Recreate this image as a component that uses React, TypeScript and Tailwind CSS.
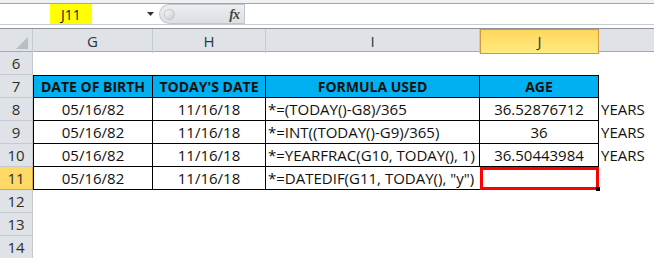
import React from "react";

// column widths of the visible sheet area (row header, G, H, I, J, K)
const cols = "grid-cols-[33px_120px_113px_214px_119px_1fr]";

const rows = [
  { n: 8, dob: "05/16/82", today: "11/16/18", formula: '*=(TODAY()-G8)/365', age: "36.52876712", unit: "YEARS" },
  { n: 9, dob: "05/16/82", today: "11/16/18", formula: "*=INT((TODAY()-G9)/365)", age: "36", unit: "YEARS" },
  { n: 10, dob: "05/16/82", today: "11/16/18", formula: "*=YEARFRAC(G10, TODAY(), 1)", age: "36.50443984", unit: "YEARS" },
];

function RowHead({ n, active }: { n: number; active?: boolean }) {
  return (
    <div
      className={
        active
          ? "h-[23px] flex items-center justify-center bg-[#ffd966] border-b border-r border-[#e3a33b] text-[15px] text-[#2d2d2d]"
          : "h-[23px] flex items-center justify-center bg-[#dfe3e8] border-b border-r border-[#c5cad1] text-[15px] text-[#2d2d2d]"
      }
    >
      {n}
    </div>
  );
}

export default function App() {
  return (
    <div className="w-[654px] h-[258px] overflow-hidden bg-white font-['Open_Sans',sans-serif] text-[#111]">
      {/* formula bar */}
      <div className="h-[4px] bg-[#eef0f3] border-b border-[#a2a6ab]" />
      <div className="h-[20px] flex items-stretch bg-white">
        <div className="w-[159px] relative flex items-center">
          <div className="ml-[50px] w-[42px] h-full bg-[#ffff00] flex items-center justify-center text-[14px] text-[#222]">
            J11
          </div>
          <svg className="absolute left-[147px] top-[8px]" width="8" height="5" viewBox="0 0 8 5">
            <path d="M0 0h7L3.5 4z" fill="#333" />
          </svg>
        </div>
        <div className="w-[85px] relative rounded-l-[11px] bg-gradient-to-b from-[#eceef1] to-[#dcdfe3] border border-r-0 border-[#c3c7cc] flex items-center justify-end pr-[5px]">
          <div className="absolute left-[4px] top-[4px] w-[11px] h-[11px] rounded-full bg-gradient-to-br from-[#f8f9fa] to-[#c9cdd2] border border-[#c0c4c9]" />
          <span className="font-['Liberation_Serif',serif] italic font-bold text-[14px] text-[#444] tracking-[-1px]">fx</span>
        </div>
        <div className="flex-1 border-l border-[#c3c7cc]" />
      </div>
      <div className="h-[5px] border-t border-[#c9ccd0] bg-white border-b border-b-[#8f9398]" />

      {/* column headers */}
      <div className={`grid ${cols} h-[23px] bg-[#dfe3e8] border-b border-[#a6abb1] text-[15px] text-[#2b3440]`}>
        <div className="relative border-r border-[#c5cad1]">
          <svg className="absolute right-[4px] bottom-[4px]" width="12" height="12" viewBox="0 0 12 12">
            <path d="M12 0v12H0z" fill="#b9bec5" />
          </svg>
        </div>
        <div className="flex items-center justify-center border-r border-[#c5cad1]">G</div>
        <div className="flex items-center justify-center border-r border-[#c5cad1]">H</div>
        <div className="flex items-center justify-center border-r border-[#c5cad1]">I</div>
        <div className="flex items-center justify-center bg-gradient-to-b from-[#ffd65c] to-[#ffeb80] border border-[#d39a3a] -mb-px">
          J
        </div>
        <div />
      </div>

      {/* sheet body */}
      <div className={`grid ${cols} text-[15px]`}>
        <RowHead n={6} />
        <div className="col-span-5" />

        <RowHead n={7} />
        <div className="h-[23px] flex items-center justify-center bg-[#00b0f0] border border-black font-bold text-[14px]">DATE OF BIRTH</div>
        <div className="h-[23px] flex items-center justify-center bg-[#00b0f0] border-y border-r border-black font-bold text-[14px]">TODAY'S DATE</div>
        <div className="h-[23px] flex items-center justify-center bg-[#00b0f0] border-y border-r border-black font-bold text-[14px]">FORMULA USED</div>
        <div className="h-[23px] flex items-center justify-center bg-[#00b0f0] border-y border-r border-black font-bold text-[14px]">AGE</div>
        <div />

        {rows.map((r) => (
          <React.Fragment key={r.n}>
            <RowHead n={r.n} />
            <div className="h-[23px] flex items-center justify-center border-x border-b border-black">{r.dob}</div>
            <div className="h-[23px] flex items-center justify-center border-r border-b border-black">{r.today}</div>
            <div className="h-[23px] flex items-center pl-[2px] border-r border-b border-black whitespace-nowrap">{r.formula}</div>
            <div className="h-[23px] flex items-center justify-center border-r border-b border-black">{r.age}</div>
            <div className="h-[23px] flex items-center pl-[2px]">{r.unit}</div>
          </React.Fragment>
        ))}

        <RowHead n={11} active />
        <div className="h-[23px] flex items-center justify-center border-x border-b border-black">05/16/82</div>
        <div className="h-[23px] flex items-center justify-center border-r border-b border-black">11/16/18</div>
        <div className="h-[23px] flex items-center pl-[2px] border-b border-black whitespace-nowrap">*=DATEDIF(G11, TODAY(), "y")</div>
        {/* selected cell with fill handle */}
        <div className="relative h-[23px] border-[3px] border-[#ff0000]">
          <div className="absolute -right-[4px] -bottom-[4px] w-[4px] h-[4px] bg-black" />
        </div>
        <div />

        <RowHead n={12} />
        <div className="col-span-5" />
        <RowHead n={13} />
        <div className="col-span-5" />
        <RowHead n={14} />
        <div className="col-span-5" />
      </div>
    </div>
  );
}
